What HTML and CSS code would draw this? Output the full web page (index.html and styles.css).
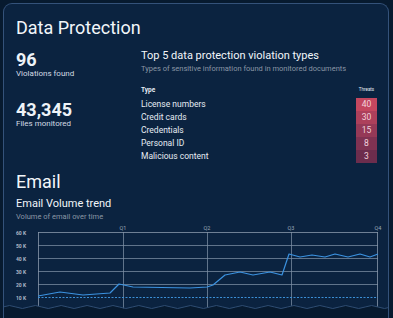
FILE: index.html
```html
<!DOCTYPE html>
<html lang="en">
  <head>
    <meta charset="UTF-8" />
    <meta name="viewport" content="width=device-width, initial-scale=1.0" />
    <title>Data Protection</title>
    <link rel="stylesheet" href="styles.css">
  </head>
  <body>
    <div class="card">
      <h1 class="section-title">Data Protection</h1>

      <div class="dp-row">
        <div class="stats">
          <div class="stat">
            <div class="stat-value">96</div>
            <div class="stat-label">Violations found</div>
          </div>
          <div class="stat">
            <div class="stat-value">43,345</div>
            <div class="stat-label">Files monitored</div>
          </div>
        </div>

        <div class="violations">
          <h2 class="panel-title">Top 5 data protection violation types</h2>
          <p class="panel-sub">Types of sensitive information found in monitored documents</p>

          <div class="threat-table">
            <div class="th">Type</div>
            <div class="th th-threats">Threats</div>

            <div class="td">License numbers</div>
            <div class="cell c1">40</div>
            <div class="td">Credit cards</div>
            <div class="cell c2">30</div>
            <div class="td">Credentials</div>
            <div class="cell c3">15</div>
            <div class="td">Personal ID</div>
            <div class="cell c4">8</div>
            <div class="td">Malicious content</div>
            <div class="cell c5">3</div>
          </div>
        </div>
      </div>

      <h1 class="section-title email-title">Email</h1>
      <h2 class="panel-title">Email Volume trend</h2>
      <p class="panel-sub">Volume of email over time</p>

      <svg class="chart" width="363" height="93" viewBox="0 0 363 93">
        <!-- quarter labels -->
        <g class="q-label">
          <text x="107" y="7">Q1</text>
          <text x="191" y="7">Q2</text>
          <text x="275" y="7">Q3</text>
          <text x="362" y="7">Q4</text>
        </g>

        <!-- grid -->
        <g class="grid">
          <line x1="22" y1="22.5" x2="362" y2="22.5" />
          <line x1="22" y1="35.5" x2="362" y2="35.5" />
          <line x1="22" y1="48.5" x2="362" y2="48.5" />
          <line x1="22" y1="61.5" x2="362" y2="61.5" />
          <line x1="107.5" y1="9" x2="107.5" y2="93" />
          <line x1="191.5" y1="9" x2="191.5" y2="93" />
          <line x1="275.5" y1="9" x2="275.5" y2="93" />
        </g>
        <g class="frame">
          <line x1="22" y1="9.5" x2="362" y2="9.5" />
          <line x1="22.5" y1="9" x2="22.5" y2="93" />
          <line x1="361.5" y1="9" x2="361.5" y2="93" />
        </g>

        <g class="y-label">
          <text x="0" y="11.5">60 K</text>
          <text x="0" y="24.5">50 K</text>
          <text x="0" y="37.5">40 K</text>
          <text x="0" y="50.5">30 K</text>
          <text x="0" y="63.5">20 K</text>
          <text x="0" y="76.5">10 K</text>
        </g>

        <line class="baseline" x1="22" y1="74.5" x2="362" y2="74.5" />

        <polyline class="trend" points="22,73 44,69 67,72 94,70 103,61 117,64 174,65 191,64 197,62 209,52 224,49 237,52 254,49 266,52 273,31 284,34 296,32 309,34 319,31 332,34 344,31 354,34 362,31" />
      </svg>

      <!-- torn bottom edge -->
      <svg class="torn" viewBox="0 0 388 14" preserveAspectRatio="none">
        <path class="torn-fill" d="M0,3 Q6.5,0 13,3 T26,3 T39,3 T52,3 T65,3 T78,3 T91,3 T104,3 T117,3 T130,3 T143,3 T156,3 T169,3 T182,3 T195,3 T208,3 T221,3 T234,3 T247,3 T260,3 T273,3 T286,3 T299,3 T312,3 T325,3 T338,3 T351,3 T364,3 T377,3 T390,3 L390,14 L0,14 Z" />
        <path class="torn-line" d="M0,3 Q6.5,0 13,3 T26,3 T39,3 T52,3 T65,3 T78,3 T91,3 T104,3 T117,3 T130,3 T143,3 T156,3 T169,3 T182,3 T195,3 T208,3 T221,3 T234,3 T247,3 T260,3 T273,3 T286,3 T299,3 T312,3 T325,3 T338,3 T351,3 T364,3 T377,3 T390,3" />
      </svg>
    </div>
  </body>
</html>
```

FILE: styles.css
```css
* {
  margin: 0;
  padding: 0;
  box-sizing: border-box;
}

body {
  font-family: Roboto, "Liberation Sans", sans-serif;
  background: #071a2f;
  color: #eef3f8;
  padding: 3px 4px 0 3px;
  overflow: hidden;
}

.card {
  position: relative;
  height: 315px;
  background: #0b2340;
  border: 1px solid #34527a;
  border-bottom: none;
  border-radius: 9px 9px 0 0;
  padding: 14px 11px 0 12px;
  overflow: hidden;
}

.section-title {
  font-size: 18px;
  line-height: 20px;
  font-weight: 400;
  color: #f2f6fa;
}

.dp-row {
  display: flex;
  margin-top: 11px;
}

.stats {
  width: 125px;
  padding-top: 2px;
}

.stat + .stat {
  margin-top: 22px;
}

.stat-value {
  font-size: 18px;
  line-height: 18px;
  font-weight: 700;
}

.stat-label {
  font-size: 8px;
  line-height: 10px;
  color: #d3dbe4;
}

.violations {
  flex: 1;
}

.panel-title {
  font-size: 11px;
  line-height: 14px;
  font-weight: 400;
  color: #f2f6fa;
}

.panel-sub {
  font-size: 7.5px;
  line-height: 10px;
  color: #8a96a5;
  margin-top: 1px;
}

.threat-table {
  display: grid;
  grid-template-columns: 1fr 21px;
  margin-top: 12px;
}

.th {
  font-size: 6.5px;
  line-height: 8px;
  font-weight: 700;
  color: #e6ecf3;
  margin-bottom: 4px;
}

.th-threats {
  font-size: 4.5px;
  font-weight: 400;
  text-align: center;
}

.td {
  font-size: 8.5px;
  line-height: 13px;
  height: 13px;
  color: #e6ecf3;
}

.cell {
  font-size: 8.5px;
  line-height: 13px;
  height: 13px;
  text-align: center;
  color: #f3d3dc;
}

.c1 { background: #c4475f; }
.c2 { background: #ad405b; }
.c3 { background: #953957; }
.c4 { background: #7f3252; }
.c5 { background: #6c2d4d; }

.email-title {
  margin-top: 9px;
}

.email-title + .panel-title {
  margin-top: 5px;
}

.chart {
  display: block;
  margin-top: 1px;
  overflow: visible;
}

.q-label text {
  font-size: 5.5px;
  fill: #9aa8b8;
  text-anchor: middle;
}

.y-label text {
  font-size: 5px;
  font-weight: 700;
  fill: #aeb9c7;
}

.grid line {
  stroke: #7d8fa5;
  stroke-width: 1;
  opacity: 0.75;
}

.frame line {
  stroke: #8898ab;
  stroke-width: 1;
  opacity: 0.8;
}

.baseline {
  stroke: #3b8fd6;
  stroke-width: 1;
  stroke-dasharray: 2 1.5;
}

.trend {
  fill: none;
  stroke: #3b92e0;
  stroke-width: 1.2;
  stroke-linejoin: round;
}

.torn {
  position: absolute;
  left: -1px;
  bottom: 0;
  width: calc(100% + 2px);
  height: 14px;
}

.torn-fill {
  fill: #071a2f;
}

.torn-line {
  fill: none;
  stroke: #2f4d72;
  stroke-width: 1;
}
```
